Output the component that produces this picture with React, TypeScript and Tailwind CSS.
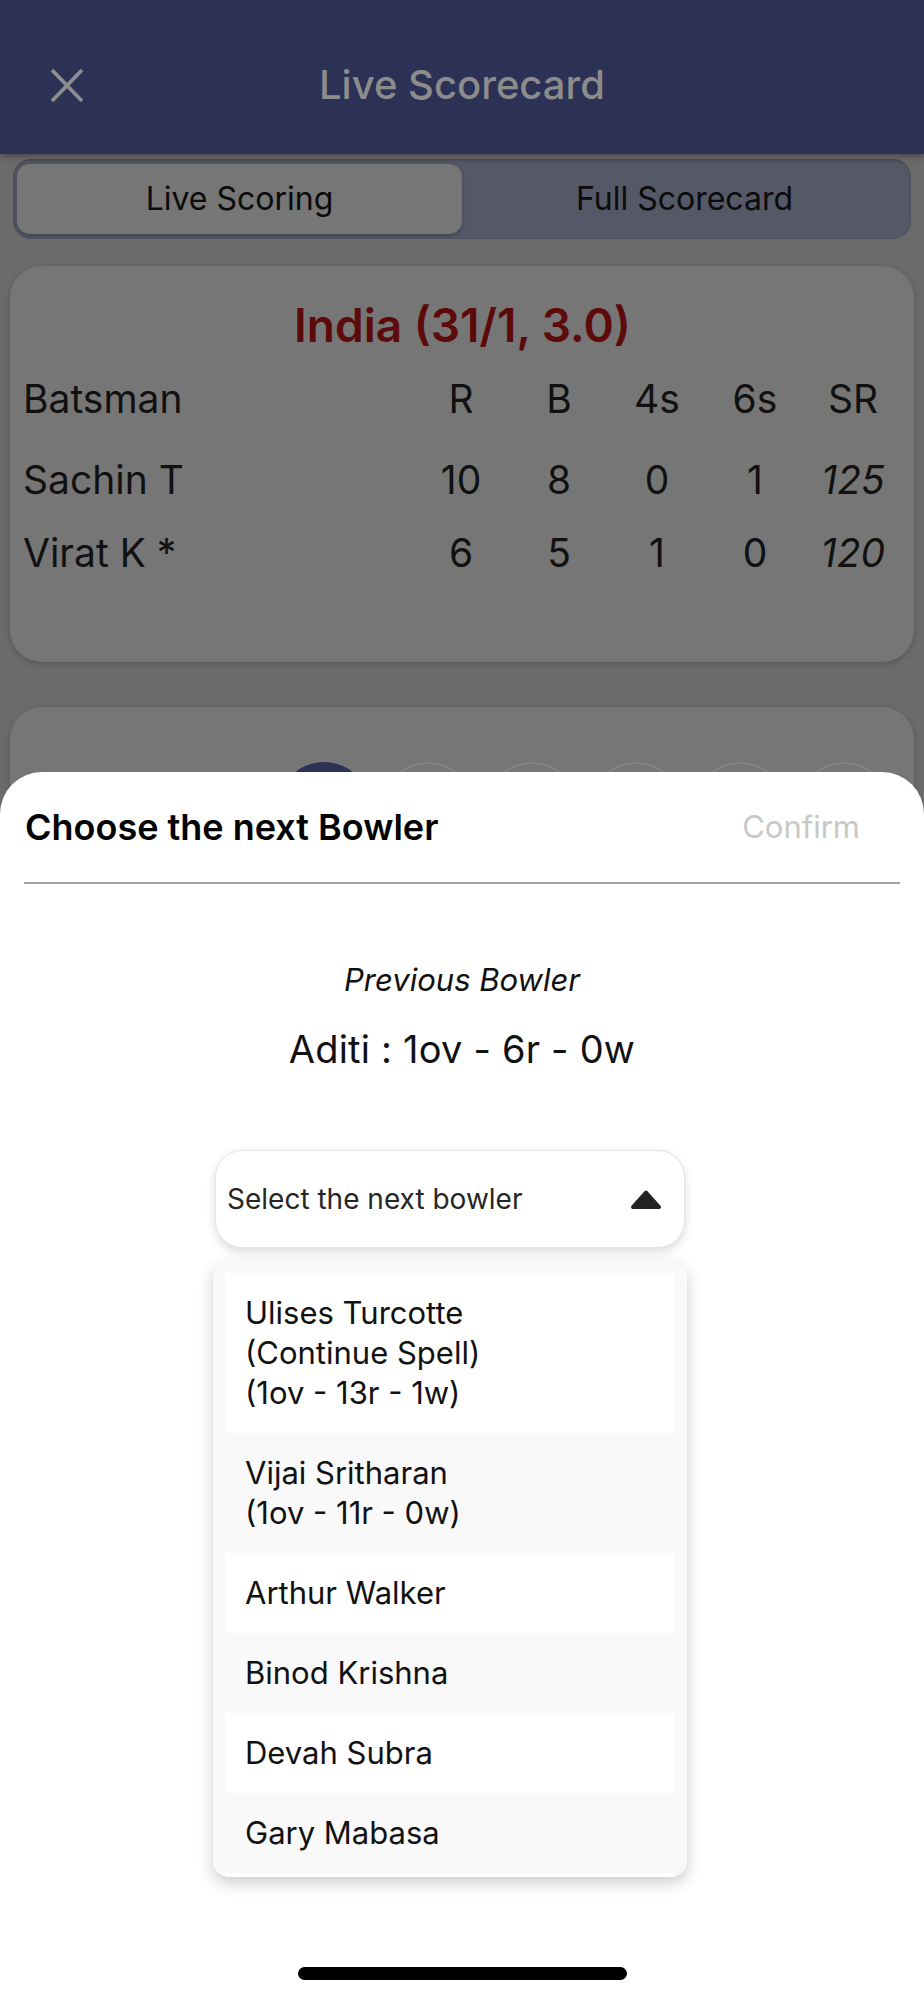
import React from "react";

const bowlers: { lines: string[] }[] = [
  { lines: ["Ulises Turcotte", "(Continue Spell)", "(1ov - 13r - 1w)"] },
  { lines: ["Vijai Sritharan", "(1ov - 11r - 0w)"] },
  { lines: ["Arthur Walker"] },
  { lines: ["Binod Krishna"] },
  { lines: ["Devah Subra"] },
  { lines: ["Gary Mabasa"] },
];

const batsmen = [
  { name: "Sachin T", r: "10", b: "8", f: "0", s: "1", sr: "125" },
  { name: "Virat K *", r: "6", b: "5", f: "1", s: "0", sr: "120" },
];

function CloseIcon() {
  return (
    <svg width="34" height="35" viewBox="0 0 34 35" fill="none">
      <path d="M2 2 L32 33 M32 2 L2 33" stroke="#8e8e8e" strokeWidth="3.8" strokeLinecap="butt" />
    </svg>
  );
}

function TriangleUp() {
  return (
    <svg width="34" height="21" viewBox="0 0 34 21">
      <path
        d="M4 18 L17 3.5 L30 18 Z"
        fill="#232323"
        stroke="#232323"
        strokeWidth="4"
        strokeLinejoin="round"
      />
    </svg>
  );
}

export default function App() {
  return (
    <div
      className="relative w-[924px] h-[2000px] overflow-hidden bg-[#6b6b6b]"
      style={{ fontFamily: "Inter, 'Noto Sans', 'Liberation Sans', sans-serif" }}
    >
      {/* Header */}
      <div className="h-[154px] bg-[#2c3156] pt-[16px] grid grid-cols-[1fr_auto_1fr] items-center shadow-[0_3px_6px_rgba(0,0,0,0.3)] relative z-10">
        <div className="pl-[50px] flex items-center">
          <CloseIcon />
        </div>
        <div className="text-[40px] leading-[50px] text-[#8c8c8c] font-medium">Live Scorecard</div>
        <div />
      </div>

      {/* Segmented control */}
      <div className="mx-[13px] mt-[5px] h-[80px] rounded-[18px] bg-[#555867] px-[4px] py-[5px] grid grid-cols-2 shadow-[inset_0_1px_3px_rgba(0,0,0,0.25)]">
        <div className="rounded-[13px] bg-[#767676] flex items-center justify-center text-[32px] text-[#0b0b0b] shadow-[0_2px_4px_rgba(0,0,0,0.25)]">
          Live Scoring
        </div>
        <div className="flex items-center justify-center text-[32px] text-[#0b0b0b]">Full Scorecard</div>
      </div>

      {/* Batting card */}
      <div className="mx-[10px] mt-[27px] h-[396px] rounded-[32px] bg-[#767676] shadow-[0_2px_6px_rgba(0,0,0,0.2)] pt-[31px] pl-[13px] pr-[12px]">
        <div className="h-[56px] leading-[56px] text-center text-[46px] font-semibold text-[#5c0a0a]">
          India (31/1, 3.0)
        </div>
        <div className="mt-[22px] h-[48px] leading-[48px] grid grid-cols-[1fr_98px_98px_98px_98px_98px] text-[39px] text-[#111]">
          <div>Batsman</div>
          <div className="text-center">R</div>
          <div className="text-center">B</div>
          <div className="text-center">4s</div>
          <div className="text-center">6s</div>
          <div className="text-center">SR</div>
        </div>
        {batsmen.map((b, i) => (
          <div
            key={b.name}
            className={`${i === 0 ? "mt-[33px]" : "mt-[25px]"} h-[48px] leading-[48px] grid grid-cols-[1fr_98px_98px_98px_98px_98px] text-[39px] text-[#111]`}
          >
            <div>{b.name}</div>
            <div className="text-center">{b.r}</div>
            <div className="text-center">{b.b}</div>
            <div className="text-center">{b.f}</div>
            <div className="text-center">{b.s}</div>
            <div className="text-center italic">{b.sr}</div>
          </div>
        ))}
      </div>

      {/* Over card (mostly hidden) */}
      <div className="mx-[10px] mt-[45px] h-[400px] rounded-[32px] bg-[#767676] shadow-[0_2px_6px_rgba(0,0,0,0.2)] pt-[55px] pl-[268px] flex gap-[12px]">
        <div className="w-[92px] h-[92px] rounded-full bg-[#2d3256]" />
        {[0, 1, 2, 3, 4].map((i) => (
          <div key={i} className="w-[92px] h-[92px] rounded-full border-2 border-[#838383]" />
        ))}
      </div>

      {/* Bottom sheet */}
      <div className="absolute left-0 right-0 top-[772px] h-[1228px] bg-white rounded-t-[42px] z-20">
        <div className="pt-[31px] pl-[25px] pr-[64px]">
          <div className="h-[48px] flex items-center justify-between">
            <div className="text-[36px] font-semibold text-black">Choose the next Bowler</div>
            <div className="text-[31px] text-[#c8c8c8]">Confirm</div>
          </div>
        </div>
        <div className="mx-[24px] mt-[31px] h-[2px] bg-[#a0a0a0]" />

        <div className="mt-[76px] text-center italic text-[31px] leading-[40px] text-[#111]">Previous Bowler</div>
        <div className="mt-[25px] text-center text-[38px] leading-[48px] text-[#111] tracking-[0.2px]">
          Aditi : 1ov - 6r - 0w
        </div>

        {/* Select */}
        <div className="mt-[77px] ml-[215px] w-[470px] h-[98px] rounded-[27px] bg-white border border-[#e4e4e4] shadow-[0_4px_10px_rgba(0,0,0,0.14)] flex items-center justify-between pl-[11px] pr-[21px]">
          <span className="text-[28px] text-[#262626]">Select the next bowler</span>
          <TriangleUp />
        </div>

        {/* Dropdown */}
        <div className="mt-[13px] ml-[213px] w-[474px] h-[616px] rounded-[16px] bg-[#f9f9f9] shadow-[0_6px_16px_rgba(0,0,0,0.2)] overflow-hidden pt-[12px] px-[12px]">
          {bowlers.map((b, i) => (
            <div
              key={i}
              className={`${i % 2 === 0 ? "bg-white" : "bg-[#f9f9f9]"} px-[20px] py-[20px] text-[31px] leading-[40px] text-[#111]`}
            >
              {b.lines.map((l) => (
                <div key={l}>{l}</div>
              ))}
            </div>
          ))}
          <div className="h-[80px] bg-white" />
        </div>

        {/* Home indicator */}
        <div className="absolute bottom-[20px] left-[298px] w-[329px] h-[13px] rounded-full bg-black" />
      </div>
    </div>
  );
}
